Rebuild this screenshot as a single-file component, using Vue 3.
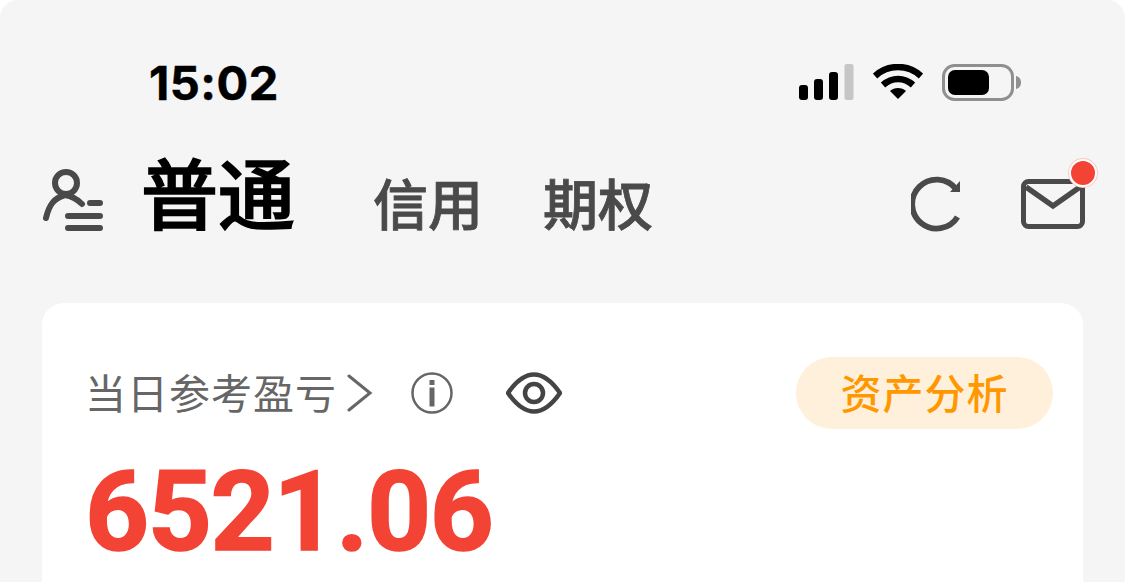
<script setup>
const tabs = ['信用', '期权']
</script>

<template>
  <div class="screen">
    <div class="status">
      <span class="time">15:02</span>
      <div class="status-icons">
        <svg class="signal" width="56" height="36" viewBox="0 0 56 36">
          <rect x="0" y="21" width="9" height="15" rx="3" fill="#000" />
          <rect x="15" y="15" width="9" height="21" rx="3" fill="#000" />
          <rect x="30" y="8" width="9" height="28" rx="3" fill="#000" />
          <rect x="45.500" y="0" width="9" height="36" rx="2" fill="#c6c6c6" />
        </svg>
        <svg class="wifi" width="50" height="36" viewBox="0 0 50 36">
          <path d="M2 12 C15 0 35 0 48 12" fill="none" stroke="#000" stroke-width="6.500" />
          <path d="M10 21 C19 13 31 13 40 21" fill="none" stroke="#000" stroke-width="6.500" />
          <path d="M17 27 C21 23 29 23 33 27 L25 35 Z" fill="#000" />
        </svg>
        <svg class="battery" width="80" height="38" viewBox="0 0 80 38">
          <rect x="1.500" y="1.500" width="69" height="34" rx="11" fill="none" stroke="#8f8f8f" stroke-width="3" />
          <rect x="6" y="6" width="41" height="25" rx="7" fill="#000" />
          <path d="M74 12 C78 13 79 16 79 18.500 C79 21 78 24 74 25 Z" fill="#8f8f8f" />
        </svg>
      </div>
    </div>

    <header class="nav">
      <svg class="user" width="62" height="66" viewBox="0 0 62 66">
        <circle cx="23" cy="17" r="11" fill="none" stroke="#4a4a4a" stroke-width="6" />
        <path d="M3 52 C6 39 11 32 22 29 C28 30 34 33 39 38" fill="none" stroke="#4a4a4a" stroke-width="6" stroke-linecap="round" />
        <path d="M47 37 H57 M25 50 H57 M25 62 H57" fill="none" stroke="#4a4a4a" stroke-width="6" stroke-linecap="round" />
      </svg>
      <strong class="active-tab">普通</strong>
      <span v-for="t in tabs" :key="t" class="tab">{{ t }}</span>
      <div class="nav-right">
        <svg class="refresh" width="50" height="56" viewBox="0 0 50 56">
          <path d="M46.500 41 A24.500 24.500 0 1 1 45 13" fill="none" stroke="#4a4a4a" stroke-width="5.800" />
          <path d="M49 5 V16 H39 Z" fill="#4a4a4a" />
        </svg>
        <div class="mail">
          <svg width="64" height="50" viewBox="0 0 64 50">
            <rect x="2.500" y="2.500" width="59" height="45" rx="5" fill="none" stroke="#4a4a4a" stroke-width="5" />
            <path d="M5 8 L32 27 L59 8" fill="none" stroke="#4a4a4a" stroke-width="5.500" />
          </svg>
          <span class="dot"></span>
        </div>
      </div>
    </header>

    <section class="card">
      <div class="card-head">
        <span class="label">当日参考盈亏</span>
        <svg class="chevron" width="26" height="38" viewBox="0 0 26 38">
          <path d="M2 2 L23 19 L2 36" fill="none" stroke="#666" stroke-width="3" stroke-linecap="round" />
        </svg>
        <svg class="info" width="42" height="42" viewBox="0 0 42 42">
          <circle cx="21" cy="21" r="19.500" fill="none" stroke="#666" stroke-width="2.500" />
          <rect x="18.500" y="8" width="5" height="5" fill="#666" />
          <rect x="18.500" y="15.500" width="5" height="19" fill="#666" />
        </svg>
        <svg class="eye" width="56" height="42" viewBox="0 0 56 42">
          <path d="M2 21 C11 8 19 2.500 28 2.500 C37 2.500 45 8 54 21 C45 34 37 39.500 28 39.500 C19 39.500 11 34 2 21 Z" fill="none" stroke="#444" stroke-width="4.500" />
          <circle cx="28" cy="21" r="9" fill="none" stroke="#444" stroke-width="4.500" />
        </svg>
        <span class="pill">资产分析</span>
      </div>
      <div class="amount">6521.06</div>
    </section>
  </div>
</template>

<style>
html, body { margin: 0; background: #fff; }
</style>

<style scoped>
.screen {
  width: 1125px;
  height: 582px;
  overflow: hidden;
  background: #f5f5f5;
  border-radius: 18px 18px 0 0;
  font-family: "Noto Sans CJK SC", "Liberation Sans", sans-serif;
}
.status {
  height: 132px;
  padding: 64px 103px 0 149px;
  box-sizing: border-box;
  display: flex;
  justify-content: space-between;
  align-items: flex-start;
}
.time {
  font: 700 47px/38px "Inter", "Liberation Sans", sans-serif;
  color: #000;
  letter-spacing: 0.500px;
  -webkit-text-stroke: 0.500px #000;
}
.status-icons {
  display: flex;
  align-items: flex-start;
  gap: 18px;
}
.battery { margin-left: 1px; }
.nav {
  display: flex;
  align-items: center;
  height: 130px;
  padding: 0 40px 0 43px;
}
.user { flex: none; margin-top: 4px; }
.active-tab {
  margin-left: 36px;
  padding-bottom: 12px;
  font-size: 77px;
  line-height: 90px;
  font-weight: 500;
  -webkit-text-stroke: 1.500px #000;
  color: #000;
}
.tab {
  margin-left: 78px;
  font-size: 55px;
  line-height: 70px;
  font-weight: 500;
  -webkit-text-stroke: 0.800px #4a4a4a;
  color: #4a4a4a;
  margin-top: 7px;
}
.tab + .tab { margin-left: 60px; }
.nav-right {
  margin-left: auto;
  display: flex;
  align-items: center;
  gap: 60px;
  padding-top: 14px;
}
.mail { position: relative; height: 50px; }
.mail svg { display: block; }
.dot {
  position: absolute;
  right: -12px;
  top: -20px;
  width: 24px;
  height: 24px;
  background: #f34335;
  border: 2px solid #fff;
  box-shadow: 0 0 0 1px #f9c9c4;
  border-radius: 50%;
}
.card {
  margin: 41px 42px 0;
  background: #fff;
  border-radius: 22px 22px 0 0;
  padding: 54px 30px 0 43px;
  height: 300px;
  box-sizing: border-box;
}
.card-head { display: flex; align-items: center; height: 72px; }
.label {
  font-size: 41px;
  line-height: 68px;
  padding-bottom: 4px;
  color: #666;
  font-weight: 400;
  letter-spacing: 1px;
}
.chevron { margin-left: 10px; }
.info { margin-left: 38px; }
.eye { margin-left: 53px; }
.pill {
  margin-left: auto;
  width: 257px;
  height: 72px;
  box-sizing: border-box;
  padding-bottom: 4px;
  border-radius: 36px;
  background: #fff0dc;
  color: #ff9800;
  font-size: 41px;
  font-weight: 500;
  line-height: 68px;
  text-align: center;
  letter-spacing: 1px;
}
.amount {
  margin-top: 25px;
  font: 700 112px/116px "Roboto", "Liberation Sans", sans-serif;
  color: #f34335;
  -webkit-text-stroke: 1.500px #f34335;
  letter-spacing: -1.500px;
}
</style>
